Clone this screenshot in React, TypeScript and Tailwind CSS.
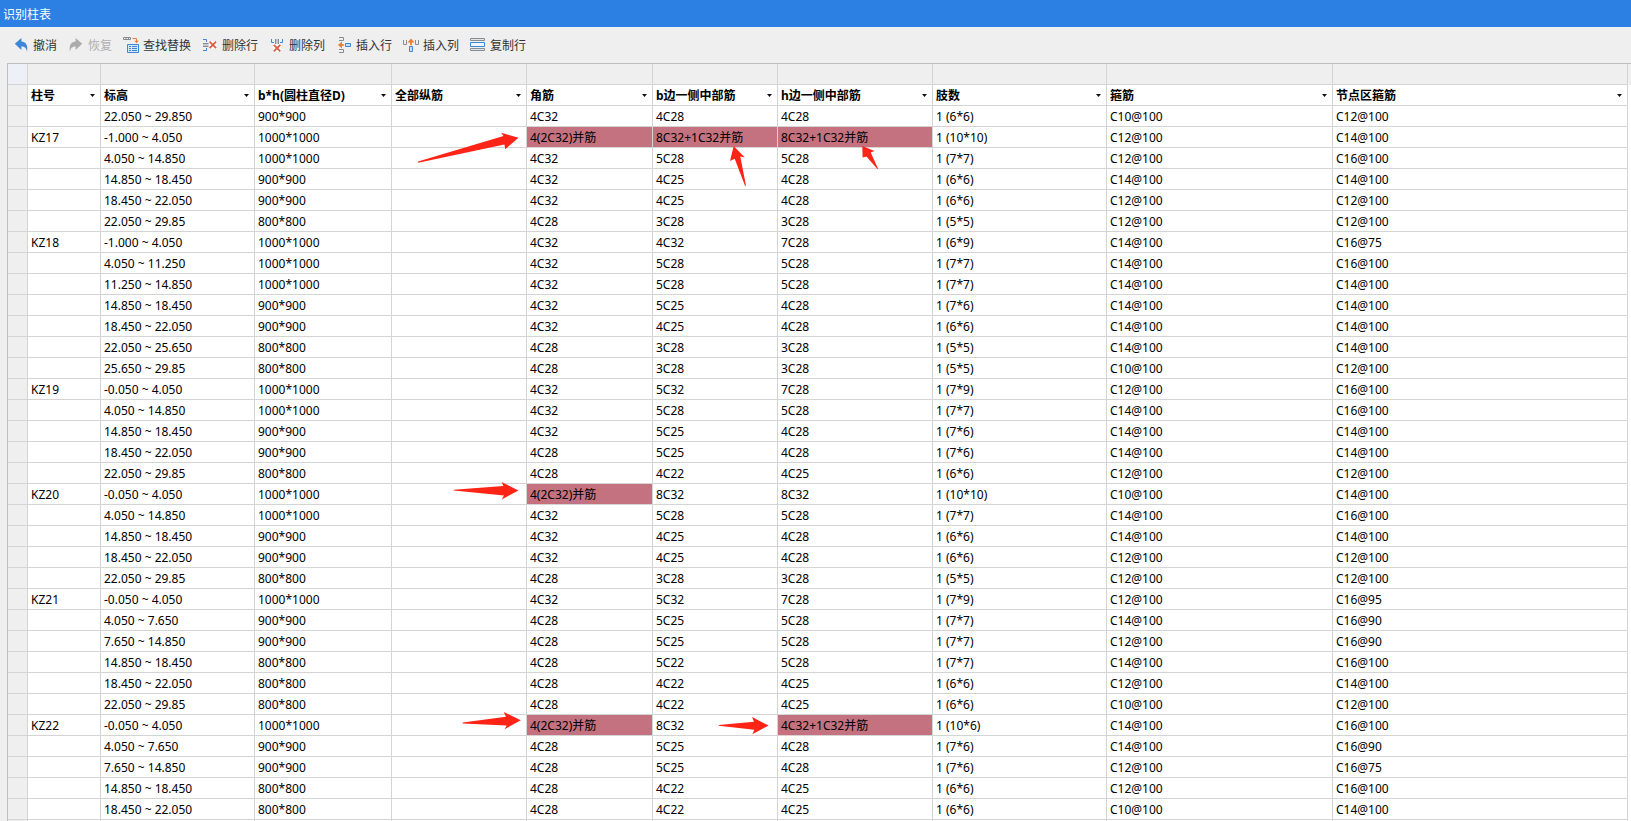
import type { ReactNode } from "react";

type Row = [string, string, string, string, string, string, string, string, string, string];

const COLUMNS = [
  { title: "柱号", width: "w-[73px]" },
  { title: "标高", width: "w-[154px]" },
  { title: "b*h(圆柱直径D)", width: "w-[137px]" },
  { title: "全部纵筋", width: "w-[135px]" },
  { title: "角筋", width: "w-[126px]" },
  { title: "b边一侧中部筋", width: "w-[125px]" },
  { title: "h边一侧中部筋", width: "w-[155px]" },
  { title: "肢数", width: "w-[174px]" },
  { title: "箍筋", width: "w-[226px]" },
  { title: "节点区箍筋", width: "" },
];

const ROWS: Row[] = [
  ["", "22.050 ~ 29.850", "900*900", "", "4C32", "4C28", "4C28", "1 (6*6)", "C10@100", "C12@100"],
  ["KZ17", "-1.000 ~ 4.050", "1000*1000", "", "4(2C32)并筋", "8C32+1C32并筋", "8C32+1C32并筋", "1 (10*10)", "C12@100", "C14@100"],
  ["", "4.050 ~ 14.850", "1000*1000", "", "4C32", "5C28", "5C28", "1 (7*7)", "C12@100", "C16@100"],
  ["", "14.850 ~ 18.450", "900*900", "", "4C32", "4C25", "4C28", "1 (6*6)", "C14@100", "C14@100"],
  ["", "18.450 ~ 22.050", "900*900", "", "4C32", "4C25", "4C28", "1 (6*6)", "C12@100", "C12@100"],
  ["", "22.050 ~ 29.85", "800*800", "", "4C28", "3C28", "3C28", "1 (5*5)", "C12@100", "C12@100"],
  ["KZ18", "-1.000 ~ 4.050", "1000*1000", "", "4C32", "4C32", "7C28", "1 (6*9)", "C14@100", "C16@75"],
  ["", "4.050 ~ 11.250", "1000*1000", "", "4C32", "5C28", "5C28", "1 (7*7)", "C14@100", "C16@100"],
  ["", "11.250 ~ 14.850", "1000*1000", "", "4C32", "5C28", "5C28", "1 (7*7)", "C14@100", "C14@100"],
  ["", "14.850 ~ 18.450", "900*900", "", "4C32", "5C25", "4C28", "1 (7*6)", "C14@100", "C14@100"],
  ["", "18.450 ~ 22.050", "900*900", "", "4C32", "4C25", "4C28", "1 (6*6)", "C14@100", "C14@100"],
  ["", "22.050 ~ 25.650", "800*800", "", "4C28", "3C28", "3C28", "1 (5*5)", "C14@100", "C14@100"],
  ["", "25.650 ~ 29.85", "800*800", "", "4C28", "3C28", "3C28", "1 (5*5)", "C10@100", "C12@100"],
  ["KZ19", "-0.050 ~ 4.050", "1000*1000", "", "4C32", "5C32", "7C28", "1 (7*9)", "C12@100", "C16@100"],
  ["", "4.050 ~ 14.850", "1000*1000", "", "4C32", "5C28", "5C28", "1 (7*7)", "C14@100", "C16@100"],
  ["", "14.850 ~ 18.450", "900*900", "", "4C32", "5C25", "4C28", "1 (7*6)", "C14@100", "C14@100"],
  ["", "18.450 ~ 22.050", "900*900", "", "4C28", "5C25", "4C28", "1 (7*6)", "C14@100", "C14@100"],
  ["", "22.050 ~ 29.85", "800*800", "", "4C28", "4C22", "4C25", "1 (6*6)", "C12@100", "C12@100"],
  ["KZ20", "-0.050 ~ 4.050", "1000*1000", "", "4(2C32)并筋", "8C32", "8C32", "1 (10*10)", "C10@100", "C14@100"],
  ["", "4.050 ~ 14.850", "1000*1000", "", "4C32", "5C28", "5C28", "1 (7*7)", "C14@100", "C16@100"],
  ["", "14.850 ~ 18.450", "900*900", "", "4C32", "4C25", "4C28", "1 (6*6)", "C14@100", "C14@100"],
  ["", "18.450 ~ 22.050", "900*900", "", "4C32", "4C25", "4C28", "1 (6*6)", "C12@100", "C12@100"],
  ["", "22.050 ~ 29.85", "800*800", "", "4C28", "3C28", "3C28", "1 (5*5)", "C12@100", "C12@100"],
  ["KZ21", "-0.050 ~ 4.050", "1000*1000", "", "4C32", "5C32", "7C28", "1 (7*9)", "C12@100", "C16@95"],
  ["", "4.050 ~ 7.650", "900*900", "", "4C28", "5C25", "5C28", "1 (7*7)", "C14@100", "C16@90"],
  ["", "7.650 ~ 14.850", "900*900", "", "4C28", "5C25", "5C28", "1 (7*7)", "C12@100", "C16@90"],
  ["", "14.850 ~ 18.450", "800*800", "", "4C28", "5C22", "5C28", "1 (7*7)", "C14@100", "C16@100"],
  ["", "18.450 ~ 22.050", "800*800", "", "4C28", "4C22", "4C25", "1 (6*6)", "C12@100", "C14@100"],
  ["", "22.050 ~ 29.85", "800*800", "", "4C28", "4C22", "4C25", "1 (6*6)", "C10@100", "C12@100"],
  ["KZ22", "-0.050 ~ 4.050", "1000*1000", "", "4(2C32)并筋", "8C32", "4C32+1C32并筋", "1 (10*6)", "C14@100", "C16@100"],
  ["", "4.050 ~ 7.650", "900*900", "", "4C28", "5C25", "4C28", "1 (7*6)", "C14@100", "C16@90"],
  ["", "7.650 ~ 14.850", "900*900", "", "4C28", "5C25", "4C28", "1 (7*6)", "C12@100", "C16@75"],
  ["", "14.850 ~ 18.450", "800*800", "", "4C28", "4C22", "4C25", "1 (6*6)", "C12@100", "C16@100"],
  ["", "18.450 ~ 22.050", "800*800", "", "4C28", "4C22", "4C25", "1 (6*6)", "C10@100", "C14@100"],
  ["", "", "", "", "", "", "", "", "", ""],
];

// Marker arrows, drawn in window coordinates (the overlay starts at 8,64)
const ARROWS = [
  "418,161.6 503.5,136 501,132.7 518.5,137.7 505.3,149.2 504.4,144.4 418.3,162.8",
  "733.7,146 744.8,157.4 740.3,156.5 746,185.8 745,185.8 734.7,158.8 730,161",
  "862.3,146 874.5,151 870.7,152.4 878,168.6 877.4,169 866.4,156.4 862.6,157.5",
  "453.7,489.7 503.4,486 501.7,482 518.5,490.6 501.7,499.4 504,495.4 453.7,490.6",
  "462.7,722.6 506,716.8 503.7,712 520.8,720.3 504.6,729.2 506.7,725.4 462.7,723.6",
  "718.7,725 754,721.7 752,717 768.7,725.6 752.3,734.2 754.4,729.8 718.7,725.8",
];

function Icon({ children }: { children: ReactNode }) {
  return (
    <svg width="16" height="16" viewBox="0 0 16 16" fill="none" className="shrink-0" aria-hidden="true">
      {children}
    </svg>
  );
}

function UndoIcon() {
  return (
    <Icon>
      <path d="M1.800 6.700 8.400 1v3.500c4.200.3 6.900 3.300 5.600 10.500-.4-4.200-2.300-5.400-5.600-5.500V13z" fill="#3f86d6" />
    </Icon>
  );
}

function RedoIcon() {
  return (
    <Icon>
      <path d="M14.200 6.700 7.600 1v3.500c-4.200.3-6.900 3.300-5.600 10.500.4-4.200 2.300-5.400 5.600-5.500V13z" fill="#ababab" />
    </Icon>
  );
}

function FindReplaceIcon() {
  return (
    <Icon>
      <path d="M.5.5h7v2h-7zM3 .5v2M5.500.5v2" stroke="#858d94" />
      <path d="M9.500 1.500h4V5" stroke="#ef7d2b" />
      <path d="M11.400 3.800h4.200l-2.100 2.400z" fill="#ef7d2b" />
      <path d="M4.500 7.500h11v8h-11z" fill="#d5e6f8" stroke="#3f86d6" />
      <path d="M6 9.500h2M9 9.500h5M6 11.500h2M9 11.500h5M6 13.500h2M9 13.500h5" stroke="#3f86d6" />
    </Icon>
  );
}

function DeleteRowIcon() {
  return (
    <Icon>
      <path d="M1 2.500h3.500V5M1 13.500h3.500V11" stroke="#3f86d6" />
      <path d="M1 6.500h5.500M1 9.500h5.500" stroke="#858d94" />
      <path d="M1 7h5.500v2H1z" fill="#c3c8cc" />
      <path d="M7 4h8v8H7z" fill="#fafafa" />
      <path d="m7.600 4.600 6.500 6.500M14.100 4.600l-6.500 6.500" stroke="#db5b3e" strokeWidth="1.700" />
    </Icon>
  );
}

function DeleteColumnIcon() {
  return (
    <Icon>
      <path d="M2.500 2v3.500H5M13.500 2v3.500H11" stroke="#3f86d6" />
      <path d="M6.500 2v5M9.500 2v5" stroke="#858d94" />
      <path d="M7 2h2v5H7z" fill="#c3c8cc" />
      <path d="M4 7h8v8H4z" fill="#fafafa" />
      <path d="m4.800 7.800 6.500 6.500M11.300 7.800l-6.500 6.500" stroke="#db5b3e" strokeWidth="1.700" />
    </Icon>
  );
}

function InsertRowIcon() {
  return (
    <Icon>
      <path d="M3 .5h4.500v3H3M3 15.500h4.500v-3H3" stroke="#858d94" />
      <path d="M3.500 8h4.300" stroke="#ef7d2b" strokeWidth="1.800" />
      <path d="M2 8 6 4.500v7z" fill="#ef7d2b" />
      <path d="M9.500 6.500h5v3h-5z" fill="#c6def7" stroke="#3f86d6" />
    </Icon>
  );
}

function InsertColumnIcon() {
  return (
    <Icon>
      <path d="M.5 3v4.500h3V3M12.500 3v4.500h3V3" stroke="#858d94" />
      <path d="M8 3.500v4.800" stroke="#ef7d2b" strokeWidth="1.800" />
      <path d="M8 1.500 4.500 5.500h7z" fill="#ef7d2b" />
      <path d="M6.500 9.500h3v5h-3z" fill="#c6def7" stroke="#3f86d6" />
    </Icon>
  );
}

function CopyRowIcon() {
  return (
    <Icon>
      <path d="M.5 1.500h14v2H.5zM.5 11.500h14v2H.5z" fill="#e4e6e8" stroke="#858d94" />
      <path d="M.5 5.500h14v4H.5z" fill="#eef5fc" stroke="#3f86d6" />
    </Icon>
  );
}

const TOOLS = [
  { label: "撤消", icon: <UndoIcon /> },
  { label: "恢复", icon: <RedoIcon />, disabled: true },
  { label: "查找替换", icon: <FindReplaceIcon /> },
  { label: "删除行", icon: <DeleteRowIcon /> },
  { label: "删除列", icon: <DeleteColumnIcon /> },
  { label: "插入行", icon: <InsertRowIcon /> },
  { label: "插入列", icon: <InsertColumnIcon /> },
  { label: "复制行", icon: <CopyRowIcon /> },
];

function Toolbar() {
  return (
    <div className="flex h-9 shrink-0 items-center gap-[11px] pl-[13px]">
      {TOOLS.map((tool) => (
        <button
          key={tool.label}
          type="button"
          disabled={tool.disabled}
          className="flex items-center gap-1 whitespace-nowrap text-[#333333] disabled:text-[#b0b0b0]"
        >
          {tool.icon}
          <span className="pt-[2px]">{tool.label}</span>
        </button>
      ))}
    </div>
  );
}

function ColumnTable() {
  return (
    <table className="w-full table-fixed border-separate border-spacing-0">
      <colgroup>
        <col className="w-5" />
        {COLUMNS.map((col) => (
          <col key={col.title} className={col.width} />
        ))}
        <col className="w-[3px]" />
      </colgroup>
      <thead>
        <tr className="h-[21px] bg-[#efefef]">
          <td className="border-r border-b border-[#d4d4d4] bg-[#edf1f7] p-0" />
          {COLUMNS.map((col) => (
            <td key={col.title} className="border-r border-b border-[#d4d4d4] p-0" />
          ))}
          <td className="p-0" />
        </tr>
        <tr className="h-[21px]">
          <td className="border-r border-b border-[#d4d4d4] bg-[#efefef] p-0" />
          {COLUMNS.map((col) => (
            <th key={col.title} scope="col" className="border-r border-b border-[#d4d4d4] p-0 pr-[5px] pl-[3px] text-left font-bold">
              <div className="flex items-center justify-between">
                <span className="pt-[2px] whitespace-nowrap">{col.title}</span>
                <button type="button" aria-label={`筛选${col.title}`} className="shrink-0">
                  <svg width="5" height="3" viewBox="0 0 5 3" aria-hidden="true">
                    <path d="M0 0h5L2.500 3z" fill="#111111" />
                  </svg>
                </button>
              </div>
            </th>
          ))}
          <td className="p-0" />
        </tr>
      </thead>
      <tbody>
        {ROWS.map((row, i) => (
          <tr key={i} className="h-[21px]">
            <td className="border-r border-b border-[#d4d4d4] bg-[#efefef] p-0" />
            {row.map((value, j) => (
              <td
                key={j}
                className={`border-r border-b border-[#d4d4d4] p-0 pt-[2px] pl-[3px] whitespace-nowrap ${
                  value.includes("并筋") ? "bg-[#c4727f]" : ""
                }`}
              >
                {value}
              </td>
            ))}
            <td className="p-0" />
          </tr>
        ))}
      </tbody>
    </table>
  );
}

export default function App() {
  return (
    <div className="flex h-screen flex-col overflow-hidden bg-[#efefef] font-['Noto_Sans','Noto_Sans_CJK_SC',sans-serif] text-xs text-black">
      <header className="flex h-[27px] shrink-0 items-center bg-[#2d80e3] pt-[2px] pl-[3px] text-white">
        <h1>识别柱表</h1>
      </header>
      <Toolbar />
      <main className="relative ml-[7px] min-h-0 flex-1 overflow-hidden border-t border-l border-[#bebebe] bg-white">
        <ColumnTable />
        <svg
          width="1000"
          height="758"
          viewBox="8 64 1000 758"
          className="pointer-events-none absolute top-0 left-0"
          aria-hidden="true"
        >
          {ARROWS.map((points) => (
            <polygon key={points} points={points} fill="#ff2415" />
          ))}
        </svg>
      </main>
    </div>
  );
}
